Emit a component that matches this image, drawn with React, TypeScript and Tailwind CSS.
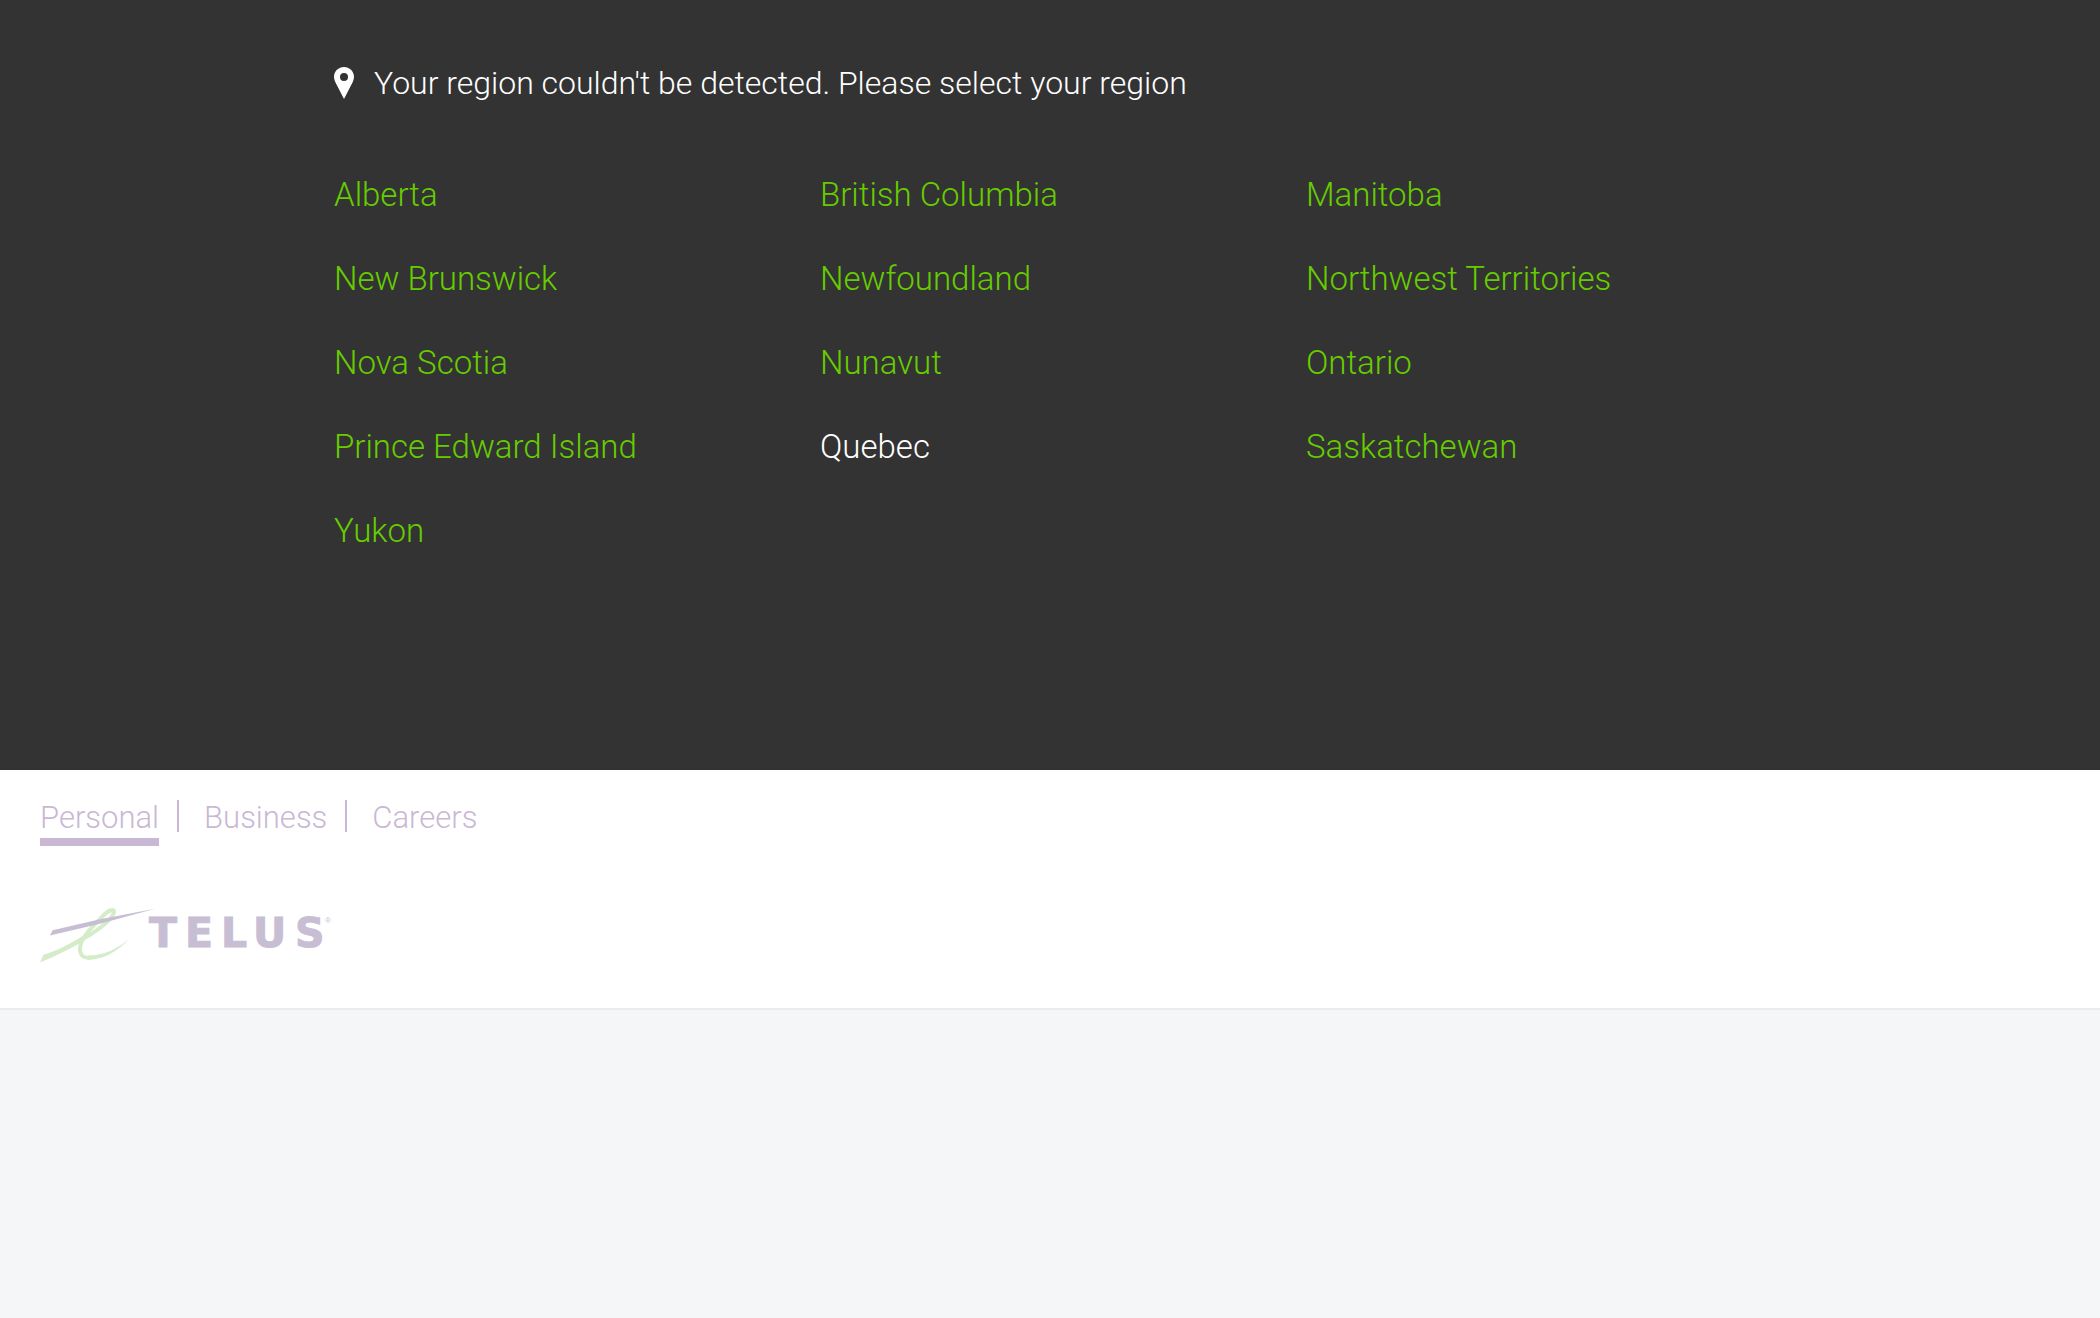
const regions = [
  "Alberta",
  "British Columbia",
  "Manitoba",
  "New Brunswick",
  "Newfoundland",
  "Northwest Territories",
  "Nova Scotia",
  "Nunavut",
  "Ontario",
  "Prince Edward Island",
  "Quebec",
  "Saskatchewan",
  "Yukon",
];

const selectedRegion = "Quebec";

function PinIcon() {
  return (
    <svg className="h-8 w-5 shrink-0" viewBox="0 0 20 32" fill="currentColor" aria-hidden="true">
      <path
        fillRule="evenodd"
        d="M10 0C4.5 0 0 4.4 0 9.8c0 1.700.6 3.700 1.500 5.600L10 32l8.500-16.600c.9-1.900 1.500-3.900 1.500-5.600C20 4.400 15.500 0 10 0Zm0 6a4 4 0 1 1 0 8 4 4 0 0 1 0-8Z"
      />
    </svg>
  );
}

function TelusLogo() {
  return (
    <svg className="h-[76px] w-[300px]" viewBox="40 892 300 76" role="img" aria-label="TELUS">
      <g fill="#d5ecc8">
        <path d="M43.500 954.800C58 950 70 944 82 936.500L84 941C70 949 56 956 40 962.500Z" />
        <path d="M88 955.500C105 956 118 948 130 938.300C118 951 104 959.500 89 959.700Z" />
        <path
          d="M78 941.500C97 932 113 919 114 912C114.500 908.500 109 909.500 103 916C93 926 80 938 80 949C80 957 86 958.500 91 957.500"
          fill="none"
          stroke="#d5ecc8"
          strokeWidth="4"
          strokeLinecap="round"
        />
      </g>
      <path d="M52.500 930.300L100 919.300L155 908.800L100 923.800L50 935.500Z" fill="#c8bed4" />
      <text
        x="149 185 221 253 295"
        y="947"
        fill="#c8bed4"
        stroke="#c8bed4"
        strokeWidth="1"
        fontFamily="'DejaVu Sans', sans-serif"
        fontWeight="700"
        fontSize="41"
      >
        TELUS
      </text>
      <text x="325" y="923" fill="#c8bed4" fontFamily="'Liberation Sans', sans-serif" fontSize="8">
        ®
      </text>
    </svg>
  );
}

const sections = ["Personal", "Business", "Careers"];

export default function App() {
  return (
    <div className="min-h-screen bg-[#f4f6f8] font-['Roboto',sans-serif] font-light">
      <section className="bg-[#333333] px-10 pt-[60px] pb-[215px]">
        <div className="mx-auto max-w-[1432px]">
          <h2 className="flex items-center gap-5 text-[32px] leading-[46px] text-white">
            <PinIcon />
            Your region couldn't be detected. Please select your region
          </h2>
          <ul className="mt-[65px] grid grid-cols-3 gap-x-[26px] gap-y-9 text-[33px] leading-[48px]">
            {regions.map((region) => (
              <li key={region}>
                <a href="#" className={region === selectedRegion ? "text-white" : "text-[#66cc00]"}>
                  {region}
                </a>
              </li>
            ))}
          </ul>
        </div>
      </section>
      <header className="border-b-2 border-[#ebebeb] bg-white px-10 pt-[30px] pb-10">
        <nav aria-label="Sections">
          <ul className="flex items-start text-[31px] leading-9 text-[#c9b8d4]">
            {sections.map((section, index) => (
              <li key={section} className="flex items-start">
                {index > 0 && <span className="mr-[25px] ml-[18px] h-8 w-0.5 bg-[#c9b8d4]" />}
                <a
                  href="#"
                  aria-current={index === 0 ? "page" : undefined}
                  className="border-b-8 border-transparent pb-0.5 aria-[current=page]:border-[#c9b8d4]"
                >
                  {section}
                </a>
              </li>
            ))}
          </ul>
        </nav>
        <a href="#" className="mt-[46px] block w-fit">
          <TelusLogo />
        </a>
      </header>
    </div>
  );
}
